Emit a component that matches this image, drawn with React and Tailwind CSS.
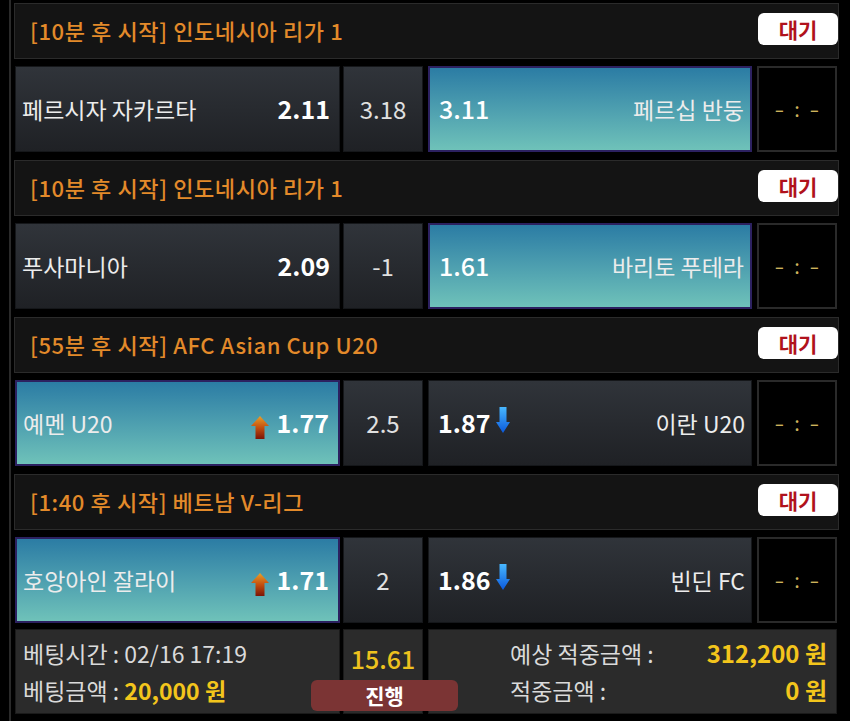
import React from "react";

const FONT = { fontFamily: '"Noto Sans CJK KR", "Noto Sans", sans-serif' };

function UpArrow() {
  return (
    <svg width="18" height="23" viewBox="0 0 18 23" className="shrink-0 mt-[8px]">
      <defs>
        <linearGradient id="ug" x1="0" y1="0" x2="0" y2="1">
          <stop offset="0" stopColor="#e9a02a" />
          <stop offset="0.5" stopColor="#c4500f" />
          <stop offset="1" stopColor="#7c1406" />
        </linearGradient>
      </defs>
      <path d="M9 0 L18 10 L13.5 10 L13.5 23 L4.5 23 L4.5 10 L0 10 Z" fill="url(#ug)" />
    </svg>
  );
}

function DownArrow() {
  return (
    <svg width="14" height="26" viewBox="0 0 14 26" className="shrink-0 mb-[6px]">
      <defs>
        <linearGradient id="dg" x1="0" y1="0" x2="0" y2="1">
          <stop offset="0" stopColor="#48b8ff" />
          <stop offset="1" stopColor="#0a58dc" />
        </linearGradient>
      </defs>
      <path d="M3.5 0 L10.5 0 L10.5 15 L14 15 L7 26 L0 15 L3.5 15 Z" fill="url(#dg)" />
    </svg>
  );
}

const matches = [
  { title: "[10분 후 시작] 인도네시아 리가 1", home: "페르시자 자카르타", ho: "2.11", draw: "3.18", ao: "3.11", away: "페르십 반둥", sel: "away" },
  { title: "[10분 후 시작] 인도네시아 리가 1", home: "푸사마니아", ho: "2.09", draw: "-1", ao: "1.61", away: "바리토 푸테라", sel: "away" },
  { title: "[55분 후 시작] AFC Asian Cup U20", home: "예멘 U20", ho: "1.77", draw: "2.5", ao: "1.87", away: "이란 U20", sel: "home", arrows: true },
  { title: "[1:40 후 시작] 베트남 V-리그", home: "호앙아인 잘라이", ho: "1.71", draw: "2", ao: "1.86", away: "빈딘 FC", sel: "home", arrows: true },
];

const selCls = "bg-gradient-to-b from-[#2b7ca4] to-[#6fc2b9] border-2 border-[#2c2160]";
const normCls = "bg-gradient-to-b from-[#30343a] to-[#1f2125] border border-[#15171a]";

function Match({ m }) {
  return (
    <div className="flex flex-col">
      <div className="h-[56px] bg-[#141414] border border-[#2b2b2b] flex items-start justify-between pl-[15px]">
        <div className="h-full flex items-center text-[22px] font-medium text-[#e38a2a] pb-[1px] tracking-[0.6px]">{m.title}</div>
        <div className="mt-[9px] w-[80px] h-[32px] bg-white rounded-[6px] flex items-center justify-center text-[21px] font-bold text-[#b0121c] leading-none">
          대기
        </div>
      </div>
      <div className="mt-[7px] h-[86px] flex px-[1px]">
        <div className={`w-[325px] flex items-center pl-[6px] pr-[9px] ${m.sel === "home" ? selCls : normCls}`}>
          <span className="text-[23px] text-[#ececec]">{m.home}</span>
          <div className="flex-1" />
          {m.arrows && <UpArrow />}
          <span className="ml-[8px] text-[25px] font-bold text-white">{m.ho}</span>
        </div>
        <div className={`ml-[3px] w-[80px] flex items-center justify-center ${normCls}`}>
          <span className="text-[24px] text-[#e0e0e0]">{m.draw}</span>
        </div>
        <div className={`ml-[5px] w-[324px] flex items-center pl-[9px] pr-[6px] ${m.sel === "away" ? selCls : normCls}`}>
          <span className={`text-[25px] text-white ${m.sel === "away" ? "font-medium" : "font-bold"}`}>{m.ao}</span>
          {m.arrows && <span className="ml-[6px] flex"><DownArrow /></span>}
          <div className="flex-1" />
          <span className="text-[23px] text-[#ececec]">{m.away}</span>
        </div>
        <div className="ml-[5px] w-[80px] bg-black border-2 border-[#2a2a2a] flex items-center justify-center gap-[11px] text-[#cdb35c] text-[20px]">
          <span className="scale-x-[1.4] inline-block">-</span>
          <span>:</span>
          <span className="scale-x-[1.4] inline-block">-</span>
        </div>
      </div>
    </div>
  );
}

export default function App() {
  return (
    <div style={FONT} className="w-[850px] h-[721px] bg-black overflow-hidden">
      <div className="ml-[9px] w-[830px] h-[721px] border-l-2 border-[#2a2a2a] pl-[3px] pt-[3px] flex flex-col gap-[8px]">
        {matches.map((m, i) => (
          <Match key={i} m={m} />
        ))}
        <div className="relative h-[85px] flex px-[1px] -mt-[2px]">
          <div className="w-[325px] bg-[#2b2b2b] border border-[#1a1a1a] flex flex-col pl-[7px] pt-[5px] text-[23px] text-[#dadada]">
            <div className="h-[36px] flex items-center">베팅시간 : 02/16 17:19</div>
            <div className="h-[38px] flex items-center">
              베팅금액 :&nbsp;<span className="font-bold text-[#f3c51c]">20,000 원</span>
            </div>
          </div>
          <div className="ml-[3px] w-[80px] bg-[#2b2b2b] border border-[#1a1a1a] flex justify-center pt-[11px]">
            <span className="text-[25px] font-medium text-[#eec21e] leading-[34px]">15.61</span>
          </div>
          <div className="ml-[5px] w-[409px] bg-[#2b2b2b] border border-[#1a1a1a] flex flex-col pl-[81px] pr-[9px] pt-[5px] text-[23px] text-[#dadada]">
            <div className="h-[36px] flex items-center justify-between">
              <span>예상 적중금액 :</span>
              <span className="text-[24px] font-bold text-[#f3c51c]">312,200 원</span>
            </div>
            <div className="h-[38px] flex items-center justify-between">
              <span>적중금액 :</span>
              <span className="text-[24px] font-bold text-[#f3c51c]">0 원</span>
            </div>
          </div>
          <div className="absolute left-[297px] top-[51px] w-[147px] h-[31px] rounded-[6px] bg-[#7b3434] flex items-center justify-center text-[21px] font-bold text-white">
            진행
          </div>
        </div>
      </div>
    </div>
  );
}
